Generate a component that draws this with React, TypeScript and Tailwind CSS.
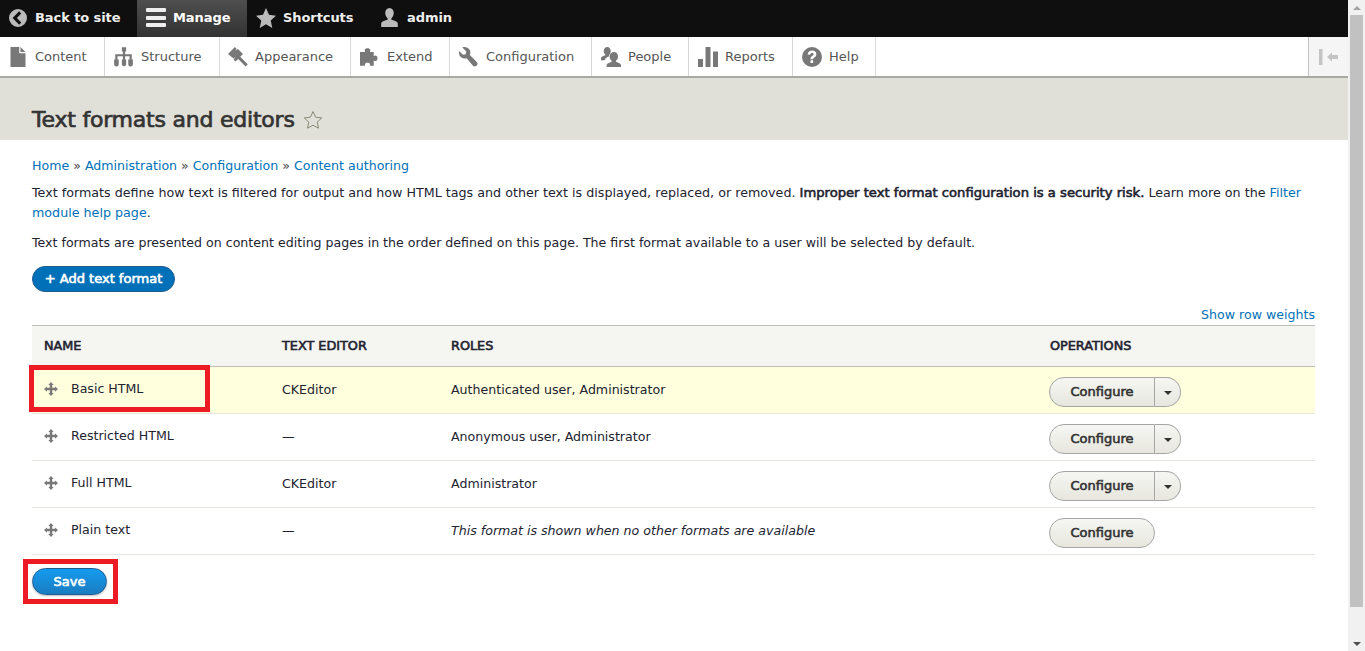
import * as React from "react"

const sans = "font-['DejaVu_Sans',Verdana,sans-serif]"
// the reference's bold is a thickened regular, so it keeps the regular's widths
const fauxBold = "[-webkit-text-stroke:0.6px_currentColor]"

function Glyph({ d, className }: { d: string; className: string }) {
  return (
    <svg viewBox="0 0 16 16" className={className} fill="currentColor">
      <path d={d} />
    </svg>
  )
}

const icons = {
  back: "M8 0a8 8 0 1 0 0 16A8 8 0 0 0 8 0zm2.900 3.900L7 8l3.900 4.100-1.900 1.800L3.200 8 9 2.100z",
  star: "M8 0l2.400 5.400 5.600.7-4.200 3.900 1.200 6L8 13l-5 3 1.200-6L0 6.100l5.600-.7z",
  user: "M8 0c2.200 0 3.600 1.800 3.600 4.200 0 1.900-.9 3.500-2 4.400v1.200c2.600.7 5.400 1.600 5.400 3.400V16H1v-2.800c0-1.800 2.800-2.700 5.400-3.400V8.600c-1.100-.9-2-2.500-2-4.400C4.400 1.800 5.800 0 8 0z",
  content: "M2 0h7v5h5v11H2zM10 0l4 4h-4z",
  structure: "M6.300 .2h3.400v3.300H8.900V5.800H14.200V10h.9v3.700a1.500 1.500 0 0 1-3.700 0V10h1V7.300H8.900V10h.8v3.700a1.700 1.700 0 0 1-3.400 0V10h.8V7.300H2.800V10h1v3.700a1.500 1.500 0 0 1-3.700 0V10h.9V5.800H7.100V3.500h-.8z",
  appearance: "M0 5.500L5.500 0l1.400 1.400L5.500 2.800 8 1.500l4 4-2.200 2.300 6 6-1.700 1.700-6-6L6 11.500l-1.500-1.300 1.300-2.500-1.400 1.400z",
  extend: "M0 4h4.200C3.400 2.800 3.600 1 6 1s2.600 1.800 1.800 3H11v3.200c1.200-.8 3-.6 3 1.800s-1.800 2.600-3 1.800V15H7.800c.6-1.200.3-2.500-1.800-2.500S3.600 13.800 4.200 15H0z",
  config: "M11.500 0c.7 0 1.300.1 1.800.4L10.200 3.500l.4 2.300 2.300.4 2.900-3c.2.500.2 1 .2 1.500a4.600 4.600 0 0 1-6.100 4.300L5 14.800a2.100 2.100 0 0 1-3.200-2.800L7.300 6.400A4.600 4.600 0 0 1 11.500 0z",
  people: "M5 0c1.700 0 2.800 1.400 2.800 3.200 0 1.300-.5 2.400-1.300 3.100v1c-1.600.6-3.100 1.500-3.500 3.200H0V8.700c0-1 1.800-1.600 3.500-2.200v-.3C2.700 5.500 2.200 4.400 2.200 3.200 2.200 1.400 3.300 0 5 0zM10.500 4c1.900 0 3.100 1.500 3.100 3.500 0 1.400-.6 2.600-1.500 3.300v1.100c1.900.6 3.900 1.200 3.900 2.400V16H4.500v-1.700c0-1.200 2-1.800 3.900-2.400v-1.100C7.500 10.100 6.900 8.900 6.900 7.500 6.900 5.500 8.600 4 10.500 4z",
  reports: "M0 9.500h4V16H0zM6 0h4v16H6zM12 3.500h4V16h-4z",
  help: "M8 0a8 8 0 1 0 0 16A8 8 0 0 0 8 0zm.1 2.800c2 0 3.400 1.100 3.400 2.900 0 1.300-.7 2-1.600 2.600-.8.500-1 .8-1 1.500H6.800c0-1.400.4-2.100 1.400-2.700.7-.5 1.100-.8 1.100-1.300 0-.6-.5-1-1.300-1-.8 0-1.400.5-1.500 1.300L4.500 5.900c.2-1.900 1.600-3.100 3.600-3.100zM6.800 10.600h2.100v2.200H6.800z",
  drag: "M8 0l3 3.400H9.400v3.200h3.200V5l3.400 3-3.400 3V9.400H9.400v3.200H11L8 16l-3-3.400h1.600V9.400H3.400V11L0 8l3.400-3v1.600h3.200V3.400H5z",
}

const tabs = [
  { label: "Content", icon: icons.content, w: "w-[105px]", pl: "pl-[8px]", flip: "" },
  { label: "Structure", icon: icons.structure, w: "w-[115px]", pl: "pl-[9px]", flip: "" },
  { label: "Appearance", icon: icons.appearance, w: "w-[131px]", pl: "pl-[8px]", flip: "" },
  { label: "Extend", icon: icons.extend, w: "w-[99px]", pl: "pl-[9px]", flip: "" },
  { label: "Configuration", icon: icons.config, w: "w-[142px]", pl: "pl-[9px]", flip: "-scale-x-100" },
  { label: "People", icon: icons.people, w: "w-[97px]", pl: "pl-[9px]", flip: "" },
  { label: "Reports", icon: icons.reports, w: "w-[104px]", pl: "pl-[9px]", flip: "" },
  { label: "Help", icon: icons.help, w: "w-[83px]", pl: "pl-[9px]", flip: "" },
]

const rows = [
  { name: "Basic HTML", editor: "CKEditor", roles: "Authenticated user, Administrator", dropdown: true, active: true },
  { name: "Restricted HTML", editor: "—", roles: "Anonymous user, Administrator", dropdown: true },
  { name: "Full HTML", editor: "CKEditor", roles: "Administrator", dropdown: true },
  { name: "Plain text", editor: "—", roles: "This format is shown when no other formats are available", dropdown: false, italic: true },
]

function Configure({ dropdown }: { dropdown: boolean }) {
  const fill = "bg-gradient-to-b from-[#f6f6f3] to-[#e7e7df]"
  return (
    <div className={`flex h-[30px] text-[13px] text-[#333] ${fauxBold}`}>
      <div
        className={`flex w-[106px] items-center justify-center border border-[#a6a6a6] ${fill} ${
          dropdown ? "rounded-l-[15px]" : "rounded-[15px]"
        }`}
      >
        Configure
      </div>
      {dropdown && (
        <div className={`flex w-[26px] items-center justify-center rounded-r-[15px] border border-l-0 border-[#a6a6a6] ${fill}`}>
          <span className="mt-[2px] border-x-[4px] border-t-[4px] border-x-transparent border-t-[#333]" />
        </div>
      )}
    </div>
  )
}

export default function App() {
  return (
    <div className={`relative flex h-[651px] overflow-hidden bg-white text-[12.6px] text-[#222330] ${sans}`}>
      <div className="w-[1348px] shrink-0">
        <div className="flex h-[37px] items-center bg-[#0f0f0f] text-[13px] font-bold tracking-[-0.08px] text-[#eee]">
          <div className="flex h-full w-[137px] items-center gap-[8px] pb-[2px] pl-[9px]">
            <Glyph d={icons.back} className="h-[18px] w-[18px] text-[#bbb]" />
            Back to site
          </div>
          <div className="flex h-full w-[110px] items-center gap-[7px] bg-gradient-to-b from-[#4f4f4f] to-[#323232] pb-[2px] pl-[9px] text-white">
            <div className="flex h-[19px] w-[20px] flex-col justify-between">
              <span className="h-[4px] rounded-[1px] bg-[#eee]" />
              <span className="h-[4px] rounded-[1px] bg-[#eee]" />
              <span className="h-[4px] rounded-[1px] bg-[#eee]" />
            </div>
            Manage
          </div>
          <div className="flex h-full w-[124px] items-center gap-[7px] pb-[2px] pl-[9px]">
            <Glyph d={icons.star} className="h-[20px] w-[20px] text-[#bbb]" />
            Shortcuts
          </div>
          <div className="flex h-full items-center gap-[8px] pb-[2px] pl-[9px]">
            <Glyph d={icons.user} className="h-[19px] w-[19px] text-[#bbb]" />
            admin
          </div>
        </div>

        <div className="flex h-[41px] border-b-[2px] border-[#a8a8a4] bg-white text-[13px] text-[#565656] shadow-[0_1px_2px_rgba(0,0,0,0.2)]">
          {tabs.map((t) => (
            <div key={t.label} className={`flex items-center gap-[7px] border-r border-[#d8d8d8] pt-[1px] ${t.w} ${t.pl}`}>
              <Glyph d={t.icon} className={`h-[20px] w-[20px] shrink-0 text-[#787878] ${t.flip}`} />
              {t.label}
            </div>
          ))}
          <div className="ml-auto flex w-[40px] items-center justify-center border-l border-[#c4c4c4] bg-[#f5f5f5] pt-[1px]">
            <svg viewBox="0 0 20 16" className="h-[16px] w-[20px] text-[#c4c4c4]" fill="currentColor">
              <path d="M0 0h3.500v16H0zM8 8l5-4.500V6h6v4h-6v2.500z" />
            </svg>
          </div>
        </div>

        <div className="flex h-[62px] items-center gap-[8px] bg-[#e0e0d8] pl-[32px] pt-[22px]">
          <h1 className="text-[22px] font-normal leading-none tracking-[-0.22px] text-[#333] [-webkit-text-stroke:0.7px_currentColor]">
            Text formats and editors
          </h1>
          <svg viewBox="0 0 20 20" className="h-[20px] w-[20px]" fill="none" stroke="#8a8a78" strokeWidth="1">
            <path d="M10 1.500l2.600 5.700 6.200.7-4.600 4.200 1.300 6.100L10 15.200l-5.500 3 1.300-6.100L1.200 7.900l6.200-.7z" />
          </svg>
        </div>

        <div className="px-[32px] pt-[17px]">
          <nav className="flex gap-[4px] leading-[18px] text-[#0071b8]">
            <a>Home</a>
            <span className="text-[#444]">»</span>
            <a>Administration</a>
            <span className="text-[#444]">»</span>
            <a>Configuration</a>
            <span className="text-[#444]">»</span>
            <a>Content authoring</a>
          </nav>
          <p className="mt-[8px] text-[12.7px] leading-[20px]">
            Text formats define how text is filtered for output and how HTML tags and other text is displayed, replaced, or removed.{" "}
            <strong className={`text-[13.15px] font-normal ${fauxBold}`}>Improper text format configuration is a security risk.</strong> Learn more on the{" "}
            <a className="text-[#0071b8]">Filter module help page</a>.
          </p>
          <p className="mt-[10px] leading-[20px]">
            Text formats are presented on content editing pages in the order defined on this page. The first format available to a user will be selected by default.
          </p>
          <div className={`mt-[13px] flex h-[26px] w-[143px] items-center justify-center rounded-[13px] border border-[#1e5c90] bg-[#0071b8] text-[13px] text-white ${fauxBold}`}>
            + Add text format
          </div>
          <div className="mt-[14px] pr-[1px] text-right leading-[18px] text-[#0071b8]">Show row weights</div>

          <table className="mt-[1px] w-[1283px] table-fixed border-collapse">
            <colgroup>
              <col className="w-[238px]" />
              <col className="w-[169px]" />
              <col className="w-[599px]" />
              <col />
            </colgroup>
            <thead>
              <tr className={`h-[41px] border-y border-[#bfbfba] bg-[#f5f5f2] text-left text-[12.8px] uppercase ${fauxBold}`}>
                <th className="pl-[12px] font-normal">Name</th>
                <th className="pl-[12px] font-normal">Text editor</th>
                <th className="pl-[12px] font-normal">Roles</th>
                <th className="pl-[12px] font-normal">Operations</th>
              </tr>
            </thead>
            <tbody>
              {rows.map((r) => (
                <tr key={r.name} className={`h-[47px] border-b border-[#e6e4df] ${r.active ? "bg-[#ffffdd]" : ""}`}>
                  <td className="pl-[12px]">
                    <div className="flex -translate-y-[1px] items-center gap-[13px]">
                      <Glyph d={icons.drag} className="h-[14px] w-[14px] text-[#787878]" />
                      {r.name}
                    </div>
                  </td>
                  <td className="pl-[12px]">{r.editor}</td>
                  <td className={`pl-[12px] ${r.italic ? "italic" : ""}`}>{r.roles}</td>
                  <td className="pl-[11px] pt-[4px]">
                    <Configure dropdown={r.dropdown} />
                  </td>
                </tr>
              ))}
            </tbody>
          </table>

          <div className={`mt-[13px] flex h-[27px] w-[75px] items-center justify-center rounded-[14px] border border-[#1e5c90] bg-gradient-to-b from-[#139cf0] to-[#1a7cc0] text-[13px] text-white shadow-[0_1px_2px_rgba(0,0,0,0.25)] ${fauxBold}`}>
            Save
          </div>
        </div>
      </div>

      <div className="flex w-[17px] flex-col bg-[#f1f1f1]">
        <div className="flex h-[15px] items-center justify-center">
          <span className="border-x-[4px] border-b-[4px] border-x-transparent border-b-[#a3a3a3]" />
        </div>
        <div className="mx-[2px] h-[592px] bg-[#c1c1c1]" />
        <div className="mt-auto flex h-[15px] items-center justify-center">
          <span className="border-x-[4px] border-t-[4px] border-x-transparent border-t-[#505050]" />
        </div>
      </div>

      <div className="absolute left-[29px] top-[365px] h-[47px] w-[181px] border-[5px] border-[#ed1c24]" />
      <div className="absolute left-[23px] top-[559px] h-[45px] w-[95px] border-[5px] border-[#ed1c24]" />
    </div>
  )
}
